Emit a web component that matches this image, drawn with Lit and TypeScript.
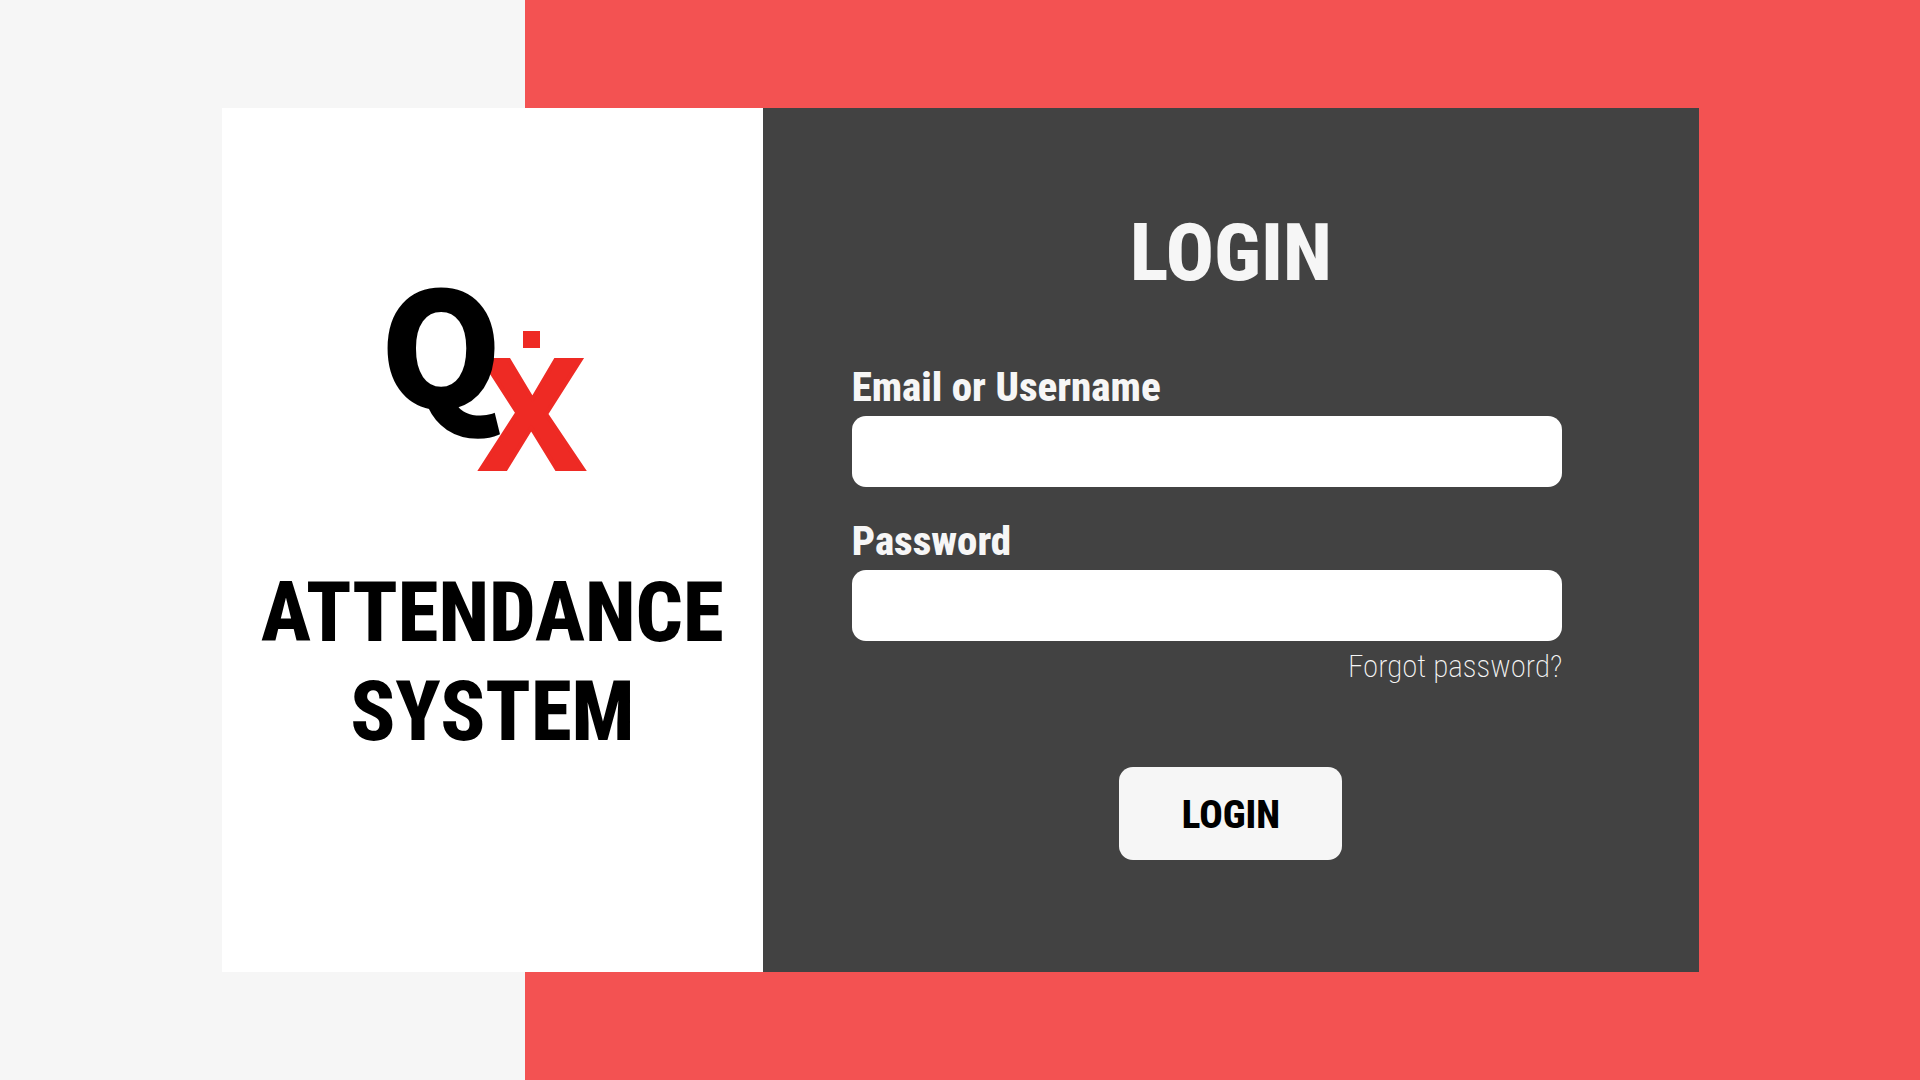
import { LitElement, html, css } from "lit";
import { customElement } from "lit/decorators.js";

@customElement("qx-logo")
class QxLogo extends LitElement {
  static styles = css`
    :host {
      display: block;
    }
    .mark {
      display: block;
      width: 226px;
      height: 200px;
      overflow: visible;
      font-weight: 700;
      font-stretch: normal;
    }
    .letter-q {
      font-family: "Noto Sans CJK JP", "Liberation Sans", sans-serif;
      font-size: 154px;
      stroke: #000;
      stroke-width: 5px;
    }
    .letter-x {
      font-family: "Open Sans", "Liberation Sans", sans-serif;
      font-size: 153px;
      stroke: #ee2a24;
      stroke-width: 4px;
    }
    .accent {
      fill: #ee2a24;
    }
  `;

  render() {
    return html`
      <svg class="mark" viewBox="0 0 226 200" role="img" aria-label="QX">
        <text class="letter-x accent" x="153" y="184" text-anchor="middle">X</text>
        <rect class="accent" x="144" y="46" width="17" height="17" />
        <text class="letter-q" x="62" y="121" text-anchor="middle">Q</text>
      </svg>
    `;
  }
}

@customElement("login-form")
class LoginForm extends LitElement {
  static styles = css`
    :host {
      display: block;
      color: #f6f6f6;
    }
    .form {
      display: flex;
      flex-direction: column;
      align-items: center;
    }
    .title {
      margin: 0 0 63px;
      font-size: 80px;
      line-height: 96px;
      font-weight: 800;
    }
    .fields {
      align-self: stretch;
      display: flex;
      flex-direction: column;
      padding: 0 137px 0 89px;
    }
    .field {
      display: flex;
      flex-direction: column;
      gap: 5px;
    }
    .field + .field {
      margin-top: 31px;
    }
    .label {
      font-size: 41px;
      line-height: 47px;
      font-weight: 800;
    }
    .input {
      box-sizing: border-box;
      width: 100%;
      height: 71px;
      padding: 0 20px;
      border: 0;
      border-radius: 14px;
      background: #fff;
      color: #000;
      font: inherit;
      font-size: 31px;
    }
    .forgot {
      align-self: flex-end;
      margin-top: 8px;
      color: inherit;
      font-size: 31px;
      line-height: 36px;
      font-weight: 200;
      text-decoration: none;
    }
    .submit {
      margin-top: 82px;
      width: 223px;
      height: 93px;
      padding: 2px 0 0;
      border: 0;
      border-radius: 14px;
      background: #f6f6f6;
      color: #000;
      font: inherit;
      font-size: 39px;
      font-weight: 800;
      cursor: pointer;
    }
  `;

  private onSubmit(event: Event) {
    event.preventDefault();
  }

  render() {
    return html`
      <form class="form" @submit=${this.onSubmit}>
        <h2 class="title">LOGIN</h2>
        <div class="fields">
          <div class="field">
            <label class="label" for="user">Email or Username</label>
            <input class="input" id="user" type="text" autocomplete="username" />
          </div>
          <div class="field">
            <label class="label" for="password">Password</label>
            <input class="input" id="password" type="password" autocomplete="current-password" />
          </div>
          <a class="forgot" href="#forgot">Forgot password?</a>
        </div>
        <button class="submit" type="submit">LOGIN</button>
      </form>
    `;
  }
}

@customElement("app-root")
class AppRoot extends LitElement {
  static styles = css`
    :host {
      display: block;
      font-family: "Roboto Condensed", Roboto, sans-serif;
      font-stretch: condensed;
    }
    .page {
      box-sizing: border-box;
      display: grid;
      min-height: 100vh;
      padding: 10vh 11.5% 10vh 11.56%;
      background: linear-gradient(to right, #f6f6f6 27.34%, #f35252 27.34%);
    }
    .card {
      display: grid;
      grid-template-columns: 541fr 937fr;
    }
    .brand {
      display: flex;
      flex-direction: column;
      align-items: center;
      justify-content: center;
      gap: 78px;
      padding-bottom: 34px;
      background: #fff;
    }
    .name {
      margin: 0;
      color: #000;
      font-size: 83px;
      line-height: 99px;
      font-weight: 800;
      text-align: center;
    }
    .panel {
      padding: 97px 0 112px;
      background: #424242;
    }
  `;

  render() {
    return html`
      <main class="page">
        <div class="card">
          <section class="brand">
            <qx-logo></qx-logo>
            <h1 class="name">ATTENDANCE<br />SYSTEM</h1>
          </section>
          <section class="panel">
            <login-form></login-form>
          </section>
        </div>
      </main>
    `;
  }
}
